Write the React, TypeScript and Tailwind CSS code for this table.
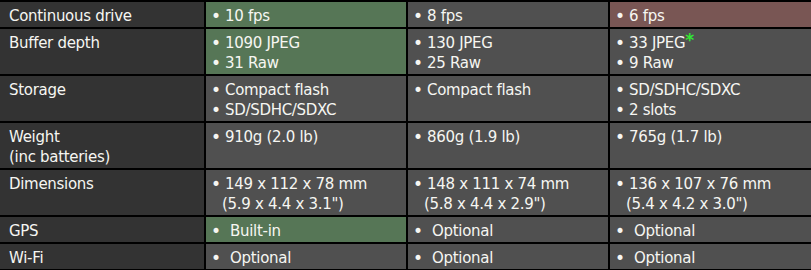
import React from 'react';

type Tone = 'plain' | 'good' | 'bad';

interface Cell {
  tone?: Tone;
  wide?: boolean;
  lines: React.ReactNode[];
  cont?: string;
}

interface Row {
  label: string[];
  cells: Cell[];
}

const star = <span className="font-bold text-[#33e633] relative -top-[2px] text-[17px] leading-[0]">*</span>;

const rows: Row[] = [
  {
    label: ['Continuous drive'],
    cells: [
      { tone: 'good', lines: ['10 fps'] },
      { lines: ['8 fps'] },
      { tone: 'bad', lines: ['6 fps'] },
    ],
  },
  {
    label: ['Buffer depth'],
    cells: [
      { tone: 'good', lines: ['1090 JPEG', '31 Raw'] },
      { lines: ['130 JPEG', '25 Raw'] },
      { lines: [<>33 JPEG{star}</>, '9 Raw'] },
    ],
  },
  {
    label: ['Storage'],
    cells: [
      { lines: ['Compact flash', 'SD/SDHC/SDXC'] },
      { lines: ['Compact flash'] },
      { lines: ['SD/SDHC/SDXC', '2 slots'] },
    ],
  },
  {
    label: ['Weight', '(inc batteries)'],
    cells: [
      { lines: ['910g (2.0 lb)'] },
      { lines: ['860g (1.9 lb)'] },
      { lines: ['765g (1.7 lb)'] },
    ],
  },
  {
    label: ['Dimensions'],
    cells: [
      { lines: ['149 x 112 x 78 mm'], cont: '(5.9 x 4.4 x 3.1")' },
      { lines: ['148 x 111 x 74 mm'], cont: '(5.8 x 4.4 x 2.9")' },
      { lines: ['136 x 107 x 76 mm'], cont: '(5.4 x 4.2 x 3.0")' },
    ],
  },
  {
    label: ['GPS'],
    cells: [
      { tone: 'good', wide: true, lines: ['Built-in'] },
      { wide: true, lines: ['Optional'] },
      { wide: true, lines: ['Optional'] },
    ],
  },
  {
    label: ['Wi-Fi'],
    cells: [
      { wide: true, lines: ['Optional'] },
      { wide: true, lines: ['Optional'] },
      { wide: true, lines: ['Optional'] },
    ],
  },
];

const toneBg: Record<Tone, string> = {
  plain: 'bg-[#505050]',
  good: 'bg-[#567656]',
  bad: 'bg-[#795654]',
};

const App: React.FC = () => {
  return (
    <div
      className="w-[811px] h-[270px] overflow-hidden bg-black pt-[2px] text-[#f6f6f2] text-[15px] leading-[20px] tracking-[-0.3px]"
      style={{ fontFamily: '"DejaVu Sans", Verdana, sans-serif' }}
    >
      <div className="grid grid-cols-[204px_200px_200px_1fr] gap-[2px]">
        {rows.map((row) => (
          <React.Fragment key={row.label[0]}>
            <div className="bg-[#333333] pl-[9px] pt-[4px] pb-[1px]">
              {row.label.map((l) => (
                <div key={l}>{l}</div>
              ))}
            </div>
            {row.cells.map((cell, i) => (
              <div
                key={i}
                className={`${toneBg[cell.tone ?? 'plain']} pl-[5px] pt-[4px] pb-[1px]`}
              >
                {cell.lines.map((line, j) => (
                  <div key={j} className="flex">
                    <span className={`${cell.wide ? 'w-[19px]' : 'w-[14px]'} shrink-0 text-[17px]`}>•</span>
                    <span>{line}</span>
                  </div>
                ))}
                {cell.cont && <div className="ml-[11px]">{cell.cont}</div>}
              </div>
            ))}
          </React.Fragment>
        ))}
      </div>
    </div>
  );
};

export default App;
